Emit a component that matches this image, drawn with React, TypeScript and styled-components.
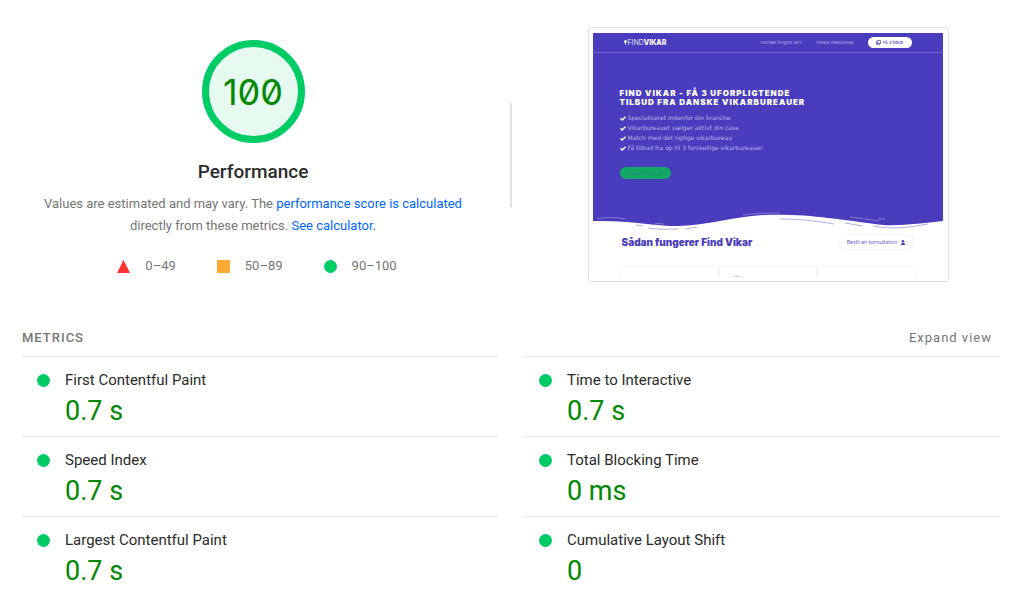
import React from "react";
import styled, { createGlobalStyle } from "styled-components";

const GlobalStyle = createGlobalStyle`
  *, *::before, *::after { box-sizing: border-box; }
  body {
    margin: 0;
    background: #fff;
    color: #2b2b2b;
    font-family: Roboto, "Liberation Sans", sans-serif;
  }
  h1, h2, h3, p, ul, dl, dd, dt { margin: 0; padding: 0; }
  ul { list-style: none; }
`;

const Report = styled.main`
  display: flex;
  flex-direction: column;
`;

const Summary = styled.section`
  display: grid;
  grid-template-columns: 1fr 1fr;
  padding-top: 27px;
`;

const ScoreColumn = styled.div`
  display: flex;
  align-items: center;
  gap: 4px;
`;

const Score = styled.div`
  flex: 1;
  display: flex;
  flex-direction: column;
  align-items: center;
  padding-top: 7px;
`;

const Divider = styled.div`
  width: 2px;
  height: 104px;
  background: #e0e0e0;
`;

const Gauge = styled.div`
  display: flex;
  align-items: center;
  justify-content: center;
  width: 103px;
  height: 103px;
  border: 7px solid #0c6;
  border-radius: 50%;
  background: #e6faf0;
  color: #080;
  font-family: Inter, "Liberation Mono", monospace;
  font-size: 36px;
  font-weight: 400;
  font-feature-settings: "zero";
`;

const ScoreTitle = styled.h1`
  margin-top: 16px;
  font-size: 19px;
  font-weight: 500;
  line-height: 26px;
`;

const Description = styled.p`
  max-width: 440px;
  margin-top: 8px;
  color: #757575;
  font-size: 13px;
  line-height: 22px;
  text-align: center;
`;

const TextLink = styled.a`
  color: #06f;
  text-decoration: none;
`;

const Legend = styled.ul`
  display: flex;
  gap: 41px;
  margin-top: 19px;
  padding-left: 8px;
  color: #757575;
  font-size: 13px;
  line-height: 20px;
`;

const LegendItem = styled.li`
  display: flex;
  align-items: center;
  gap: 15px;
`;

const Mark = styled.svg`
  display: block;
  flex: none;
  width: 13px;
  height: 13px;
`;

const PreviewColumn = styled.div`
  display: flex;
  justify-content: center;
  align-items: flex-start;
`;

const Frame = styled.figure`
  width: 361px;
  margin: 0;
  padding: 5px 5px 4px 4px;
  border: 1px solid #e0e0e0;
  border-radius: 3px;
`;

const Site = styled.div`
  height: 244px;
  overflow: hidden;
  color: #fff;
  font-family: Inter, "Liberation Sans", sans-serif;
`;

const SiteHeader = styled.header`
  display: flex;
  align-items: center;
  height: 20px;
  padding: 0 31px;
  background: #4a3dbd;
  border-bottom: 1px solid #6f65cb;
  font-size: 4px;
`;

const SiteLogo = styled.span`
  display: flex;
  align-items: center;
  gap: 1px;
  margin-right: auto;
  font-size: 7px;
  font-weight: 300;
  b { font-weight: 800; }
`;

const SiteNav = styled.nav`
  display: flex;
  gap: 14px;
  margin-right: 14px;
`;

const SiteLink = styled.a`
  color: #b7b1e5;
  text-decoration: none;
`;

const HeaderButton = styled.button`
  display: flex;
  align-items: center;
  justify-content: center;
  gap: 2px;
  width: 44px;
  height: 11px;
  padding: 0;
  border: 0;
  border-radius: 6px;
  background: #fff;
  color: #4a3dbd;
  font: 500 4px Inter, sans-serif;
`;

const Hero = styled.div`
  height: 153px;
  padding: 36px 27px 0;
  background: #4a3dbd;
`;

const HeroTitle = styled.h2`
  font-size: 8px;
  font-weight: 900;
  letter-spacing: 1px;
  line-height: 9px;
  white-space: nowrap;
`;

const HeroList = styled.ul`
  margin-top: 6px;
  color: #b9b3e6;
  font-family: "DejaVu Sans", sans-serif;
  font-size: 6px;
  line-height: 10px;
`;

const HeroItem = styled.li`
  display: flex;
  align-items: center;
  gap: 2px;
`;

const HeroButton = styled.button`
  display: flex;
  align-items: center;
  justify-content: center;
  gap: 3px;
  width: 51px;
  height: 12px;
  margin-top: 14px;
  padding: 0;
  border: 0;
  border-radius: 6px;
  background: #14a866;
  color: #2f7f8a;
  font: 500 4px "DejaVu Sans", sans-serif;
`;

const Wave = styled.svg`
  display: block;
  width: 100%;
  height: 26px;
`;

const Steps = styled.div`
  display: flex;
  align-items: center;
  justify-content: space-between;
  height: 20px;
  padding: 0 30px 0 29px;
  background: #fff;
`;

const StepsTitle = styled.h2`
  color: #4a3dbd;
  font-size: 10px;
  font-weight: 900;
  line-height: 14px;
`;

const ConsultButton = styled.button`
  display: flex;
  align-items: center;
  justify-content: center;
  gap: 4px;
  width: 73px;
  height: 14px;
  padding: 0;
  border: 0;
  border-radius: 7px;
  background: #fff;
  box-shadow: 0 0 3px #e4e4e4;
  color: #6b61c8;
  font: 400 5px Inter, sans-serif;
`;

const StepCards = styled.div`
  display: grid;
  grid-template-columns: repeat(3, 1fr);
  gap: 3px;
  padding: 15px 28px 0;
  background: #fff;
`;

const StepCard = styled.div`
  height: 11px;
  padding: 8px 12px 0;
  box-shadow: 0 0 3px #e4e4e4;
`;

const StepIcon = styled.svg`
  display: block;
  width: 10px;
  height: 2px;
`;

const Metrics = styled.section`
  padding: 45px 24px 0 22px;
`;

const MetricsHeader = styled.header`
  display: flex;
  align-items: center;
  justify-content: space-between;
  height: 20px;
  margin-bottom: 9px;
  padding-right: 8px;
  color: #757575;
`;

const MetricsTitle = styled.h2`
  font-size: 13px;
  font-weight: 500;
  letter-spacing: 1px;
`;

const ExpandButton = styled.button`
  padding: 0;
  border: 0;
  background: none;
  color: inherit;
  font: 400 13px Roboto, sans-serif;
  letter-spacing: 1px;
  cursor: pointer;
`;

const MetricGrid = styled.dl`
  display: grid;
  grid-template-columns: 1fr 1fr;
  column-gap: 26px;
`;

const Metric = styled.div`
  display: grid;
  grid-template-columns: 13px 1fr;
  column-gap: 15px;
  align-items: center;
  align-content: start;
  height: 80px;
  padding: 12px 15px 0;
  border-top: 1px solid #ebebeb;
`;

const MetricName = styled.dt`
  font-size: 15px;
  line-height: 22px;
`;

const MetricValue = styled.dd`
  grid-column: 2;
  color: #080;
  font-size: 27px;
  line-height: 40px;
`;

const metrics = [
  ["First Contentful Paint", "0.7 s"],
  ["Time to Interactive", "0.7 s"],
  ["Speed Index", "0.7 s"],
  ["Total Blocking Time", "0 ms"],
  ["Largest Contentful Paint", "0.7 s"],
  ["Cumulative Layout Shift", "0"],
];

const benefits = [
  "Specialiseret indenfor din branche",
  "Vikarbureauet vælger aktivt din case",
  "Match med det rigtige vikarbureau",
  "Få tilbud fra op til 3 forskellige vikarbureauer",
];

const PassMark = () => (
  <Mark viewBox="0 0 13 13" aria-hidden="true">
    <circle cx="6.5" cy="6.5" r="6.5" fill="#0c6" />
  </Mark>
);

const SitePreview = () => (
  <Site>
    <SiteHeader>
      <SiteLogo>
        <svg width="3" height="6" viewBox="0 0 3 6" aria-hidden="true">
          <path d="M0 1.5a1.5 1.5 0 0 1 3 0L1.9 3.4v1.4H1.1V3.4Z" fill="#fff" />
        </svg>
        <span>FIND<b>VIKAR</b></span>
      </SiteLogo>
      <SiteNav>
        <SiteLink href="#how">Hvordan fungere det?</SiteLink>
        <SiteLink href="#join">Tilmeld Vikarbureau</SiteLink>
      </SiteNav>
      <HeaderButton>
        <svg width="5" height="5" viewBox="0 0 5 5" fill="none" stroke="#4a3dbd" strokeWidth=".7" aria-hidden="true">
          <path d="M1.5.5h3v3h-3zM1.4 1.5H.5v3h3v-.9" />
        </svg>
        Få 3 tilbud
      </HeaderButton>
    </SiteHeader>
    <Hero>
      <HeroTitle>
        FIND VIKAR - FÅ 3 UFORPLIGTENDE
        <br />
        TILBUD FRA DANSKE VIKARBUREAUER
      </HeroTitle>
      <HeroList>
        {benefits.map((text) => (
          <HeroItem key={text}>
            <svg width="6" height="5" viewBox="0 0 6 5" fill="none" stroke="#fff" strokeWidth="1.5" aria-hidden="true">
              <path d="m.5 2.4 1.6 1.6L5.5.7" />
            </svg>
            {text}
          </HeroItem>
        ))}
      </HeroList>
      <HeroButton>
        Indhent tilbud
        <svg width="4" height="4" viewBox="0 0 4 4" aria-hidden="true">
          <path d="M0 1.5h2V.3L4 2 2 3.7V2.5H0Z" fill="currentColor" />
        </svg>
      </HeroButton>
    </Hero>
    <Wave viewBox="0 0 350 26" preserveAspectRatio="none" aria-hidden="true">
      <rect width="350" height="26" fill="#fff" />
      <path
        d="M0 0H350V15C330 17 310 20 290 19C272 17 255 14 235 12C215 9 190 8 170 9C140 11 110 20 85 20C60 20 35 14 0 15Z"
        fill="#4a3dbd"
      />
      <g fill="none" stroke="#fff" strokeOpacity=".5" strokeWidth=".6">
        <path d="M4 13C14 11 23 11 32 13" />
        <path d="M62 18C66 17 68 18 71 18" />
        <path d="M150 9C165 7 178 7 187 7" />
        <path d="M257 11C268 12 276 14 286 15M285 12.5L292 13" />
      </g>
      <g fill="none" stroke="#4a3dbd" strokeOpacity=".7" strokeWidth=".6">
        <path d="M43 19L50 20M55 22C66 24 76 23 85 23M93 23L104 21" />
        <path d="M187 13C205 13 225 15 241 18M252 17L270 20" />
        <path d="M280 20C300 24 318 21 335 18" />
      </g>
    </Wave>
    <Steps>
      <StepsTitle>Sådan fungerer Find Vikar</StepsTitle>
      <ConsultButton>
        Bestil en konsultation
        <svg width="4" height="5" viewBox="0 0 4 5" fill="#4a3dbd" aria-hidden="true">
          <circle cx="2" cy="1.3" r="1.3" />
          <path d="M0 5V4l1.4-1.2h1.2L4 4v1Z" />
        </svg>
      </ConsultButton>
    </Steps>
    <StepCards>
      <StepCard />
      <StepCard>
        <StepIcon viewBox="0 0 10 2" aria-hidden="true">
          <path d="M0 2Q5-1 10 2Z" fill="#c9d3f5" />
        </StepIcon>
      </StepCard>
      <StepCard />
    </StepCards>
  </Site>
);

export default function App() {
  return (
    <Report>
      <GlobalStyle />
      <Summary>
        <ScoreColumn>
          <Score>
            <Gauge>100</Gauge>
            <ScoreTitle>Performance</ScoreTitle>
            <Description>
              Values are estimated and may vary. The{" "}
              <TextLink href="#scoring">performance score is calculated</TextLink>
              <br />
              directly from these metrics. <TextLink href="#calculator">See calculator.</TextLink>
            </Description>
            <Legend>
              <LegendItem>
                <Mark viewBox="0 0 13 13" aria-hidden="true">
                  <path d="M6.5 0 13 13H0Z" fill="#f33" />
                </Mark>
                0–49
              </LegendItem>
              <LegendItem>
                <Mark viewBox="0 0 13 13" aria-hidden="true">
                  <path d="M0 0h13v13H0Z" fill="#fa3" />
                </Mark>
                50–89
              </LegendItem>
              <LegendItem>
                <PassMark />
                90–100
              </LegendItem>
            </Legend>
          </Score>
          <Divider />
        </ScoreColumn>
        <PreviewColumn>
          <Frame>
            <SitePreview />
          </Frame>
        </PreviewColumn>
      </Summary>
      <Metrics>
        <MetricsHeader>
          <MetricsTitle>METRICS</MetricsTitle>
          <ExpandButton>Expand view</ExpandButton>
        </MetricsHeader>
        <MetricGrid>
          {metrics.map(([name, value]) => (
            <Metric key={name}>
              <PassMark />
              <MetricName>{name}</MetricName>
              <MetricValue>{value}</MetricValue>
            </Metric>
          ))}
        </MetricGrid>
      </Metrics>
    </Report>
  );
}
